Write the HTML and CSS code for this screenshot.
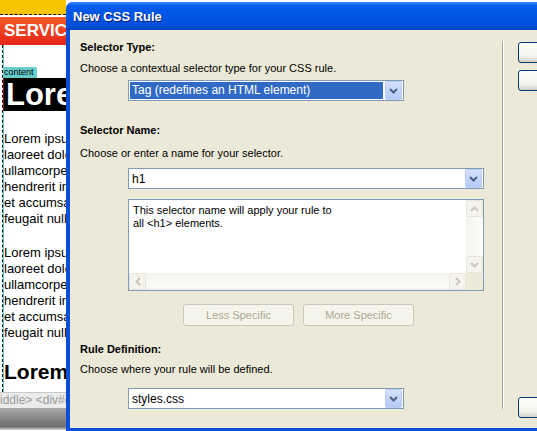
FILE: index.html
```html
<!DOCTYPE html>
<html lang="en">
<head>
<meta charset="UTF-8">
<title>New CSS Rule</title>
<link rel="stylesheet" href="styles.css">
</head>
<body>
    <div class="page">
        <div class="topbar"></div>
        <div class="banner">SERVICES</div>
        <div class="content">
            <div class="tag">content</div>
            <div class="hero">Lorem ipsum</div>
            <p class="para">Lorem ipsum dolor sit amet<br>laoreet dolore magna<br>ullamcorper suscipit<br>hendrerit in vulputate<br>et accumsan et iusto<br>feugait nulla facilisi</p>
            <p class="para">Lorem ipsum dolor sit amet<br>laoreet dolore magna<br>ullamcorper suscipit<br>hendrerit in vulputate<br>et accumsan et iusto<br>feugait nulla facilisi</p>
            <div class="subhead">Lorem ipsum</div>
        </div>
        <div class="status">iddle&gt; &lt;div#container&gt;</div>
        <div class="props"></div>
    </div>

    <div class="dialog">
        <div class="titlebar">New CSS Rule</div>
        <div class="dlgbody">
            <div class="main">
                <div class="label lbl1">Selector Type:</div>
                <div class="desc desc1">Choose a contextual selector type for your CSS rule.</div>
                <div class="select sel1">
                    <span class="picked">Tag (redefines an HTML element)</span>
                    <span class="drop"><svg width="9" height="6" viewBox="0 0 9 6"><polyline points="1,1 4.5,4.5 8,1" fill="none" stroke="#4d6185" stroke-width="2"/></svg></span>
                </div>

                <div class="label lbl2">Selector Name:</div>
                <div class="desc desc2">Choose or enter a name for your selector.</div>
                <div class="select combo">
                    <span class="val">h1</span>
                    <span class="drop"><svg width="9" height="6" viewBox="0 0 9 6"><polyline points="1,1 4.5,4.5 8,1" fill="none" stroke="#4d6185" stroke-width="2"/></svg></span>
                </div>

                <div class="infobox">
                    <div class="infotext">This selector name will apply your rule to<br>all &lt;h1&gt; elements.</div>
                    <div class="vscroll">
                        <span class="sbtn"><svg width="9" height="6" viewBox="0 0 9 6"><polyline points="1,5 4.5,1.5 8,5" fill="none" stroke="#c9c7ba" stroke-width="2"/></svg></span>
                        <span class="sbtn"><svg width="9" height="6" viewBox="0 0 9 6"><polyline points="1,1 4.5,4.5 8,1" fill="none" stroke="#c9c7ba" stroke-width="2"/></svg></span>
                    </div>
                    <div class="hscroll">
                        <span class="sbtn"><svg width="6" height="9" viewBox="0 0 6 9"><polyline points="5,1 1.5,4.5 5,8" fill="none" stroke="#c9c7ba" stroke-width="2"/></svg></span>
                        <span class="sbtn"><svg width="6" height="9" viewBox="0 0 6 9"><polyline points="1,1 4.5,4.5 1,8" fill="none" stroke="#c9c7ba" stroke-width="2"/></svg></span>
                    </div>
                    <div class="corner"></div>
                </div>

                <div class="specrow">
                    <button class="xpbtn off">Less Specific</button>
                    <button class="xpbtn off">More Specific</button>
                </div>

                <div class="label lbl3">Rule Definition:</div>
                <div class="desc desc3">Choose where your rule will be defined.</div>
                <div class="select sel3">
                    <span class="val">styles.css</span>
                    <span class="drop"><svg width="9" height="6" viewBox="0 0 9 6"><polyline points="1,1 4.5,4.5 8,1" fill="none" stroke="#4d6185" stroke-width="2"/></svg></span>
                </div>
            </div>
            <div class="sep"></div>
            <div class="side">
                <button class="xpbtn side1">OK</button>
                <button class="xpbtn side2">Cancel</button>
                <button class="xpbtn side3">Help</button>
            </div>
        </div>
    </div>
</body>
</html>
```

FILE: styles.css
```css
body{
    margin: 0;
    width: 537px;
    height: 431px;
    overflow: hidden;
    display: flex;
    background: #ffffff;
    font-family: "Liberation Sans", Arial, sans-serif;
}

/* page behind the dialog */
.page{
    width: 66px;
    height: 431px;
    flex-shrink: 0;
    overflow: hidden;
    background: #ffffff;
}
.topbar{
    height: 14px;
    background: #f8c600;
    border-bottom: 1px dashed #000;
}
.banner{
    height: 28px;
    margin-top: 2px;
    background: linear-gradient(#f25a26, #e8261a);
    color: #fff;
    font-weight: bold;
    font-size: 17px;
    line-height: 28px;
    padding-left: 4px;
    white-space: nowrap;
    overflow: hidden;
}
.content{
    height: 347px;
    margin-left: 2px;
    border-left: 1px dashed #000;
    box-shadow: inset 1px 0 0 #5cc8cc;
    padding-top: 22px;
    box-sizing: border-box;
    white-space: nowrap;
    overflow: hidden;
}
.tag{
    width: 33px;
    height: 11px;
    background: #66cccc;
    font-size: 9px;
    line-height: 11px;
    border-radius: 2px 2px 0 0;
    padding-left: 1px;
}
.hero{
    height: 33px;
    background: #000;
    color: #fff;
    font-weight: bold;
    font-size: 31px;
    line-height: 33px;
    padding-left: 2px;
    border-left: 1px solid #7a1a1a;
}
.para{
    margin: 20px 0 0 1px;
    font-size: 13px;
    line-height: 16px;
    color: #000;
}
.para + .para{
    margin-top: 18px;
}
.subhead{
    margin: 19px 0 0 1px;
    font-weight: bold;
    font-size: 21px;
    line-height: 24px;
}
.status{
    height: 15px;
    background: #ebebeb;
    border-top: 1px solid #c8c8c8;
    color: #9a9a9a;
    font-size: 12px;
    line-height: 15px;
    white-space: nowrap;
    overflow: hidden;
}
.props{
    height: 22px;
    background: linear-gradient(#a8a8a8, #6e6e6e 85%, #d8d8d8);
}

/* dialog */
.dialog{
    width: 560px;
    flex-shrink: 0;
    margin-top: 2px;
    height: 429px;
    background: #0a4fd8;
    border-radius: 7px 0 0 0;
    font-family: "Liberation Sans", Tahoma, sans-serif;
    font-size: 11px;
    color: #000;
}
.titlebar{
    height: 28px;
    border-radius: 7px 0 0 0;
    background: linear-gradient(#3d8cf5, #0a5ef0 12%, #0058e6 30%, #0054e3 60%, #0050da 85%, #0042c0);
    color: #fff;
    font-weight: bold;
    font-size: 13px;
    line-height: 29px;
    padding-left: 7px;
    text-shadow: 1px 1px 0 #0a1e6e;
}
.dlgbody{
    margin-left: 4px;
    height: 398px;
    background: #ece9d8;
    display: flex;
}
.main{
    width: 422px;
    padding-left: 10px;
    padding-top: 11px;
}
.label{
    font-weight: bold;
    line-height: 13px;
}
.desc{
    line-height: 13px;
}
.lbl2{ margin-top: 23px; }
.lbl3{ margin-top: 17px; }
.desc1{ margin-top: 8px; }
.desc2{ margin-top: 10px; }
.desc3{ margin-top: 7px; }

.select{
    margin-left: 48px;
    height: 21px;
    box-sizing: border-box;
    border: 1px solid #7f9db9;
    background: #fff;
    display: flex;
    align-items: center;
    padding: 1px;
}
.sel1{ width: 276px; margin-top: 5px; }
.combo{ width: 356px; margin-top: 8px; }
.sel3{ width: 276px; margin-top: 12px; }
.picked{
    flex: 1;
    height: 17px;
    line-height: 17px;
    background: #316ac5;
    color: #fff;
    padding-left: 2px;
    margin-right: 2px;
    font-size: 12px;
}
.val{
    flex: 1;
    padding-left: 2px;
    font-size: 12px;
}
.drop{
    width: 15px;
    height: 17px;
    border: 1px solid #bccbf2;
    border-radius: 2px;
    background: linear-gradient(#d5e1fd, #b5c9f7);
    display: flex;
    align-items: center;
    justify-content: center;
}

.infobox{
    margin: 10px 0 0 48px;
    width: 356px;
    height: 92px;
    box-sizing: border-box;
    border: 1px solid #7f9db9;
    background: #fff;
    display: grid;
    grid-template-columns: 1fr 17px;
    grid-template-rows: 1fr 17px;
}
.infotext{
    padding: 4px 0 0 4px;
    font-size: 11px;
    line-height: 13px;
}
.vscroll{
    background: linear-gradient(90deg, #f4f3ee, #fcfcf8);
    display: flex;
    flex-direction: column;
    justify-content: space-between;
}
.hscroll{
    background: linear-gradient(#f4f3ee, #fcfcf8 80%, #f0efe6);
    display: flex;
    justify-content: space-between;
}
.corner{
    background: #ece9d8;
}
.sbtn{
    width: 15px;
    height: 15px;
    border: 1px solid #e8e6da;
    border-radius: 2px;
    background: #f4f3ee;
    display: flex;
    align-items: center;
    justify-content: center;
}

.specrow{
    margin: 13px 0 0 103px;
    display: flex;
    gap: 9px;
}
.xpbtn{
    height: 22px;
    box-sizing: border-box;
    border: 1px solid #003c74;
    border-radius: 3px;
    background: linear-gradient(#ffffff, #f3f3ee 70%, #d6d0c5);
    font-family: "Liberation Sans", Tahoma, sans-serif;
    font-size: 11px;
    padding: 0;
}
.off{
    width: 111px;
    border-color: #c9c7ba;
    background: #f5f4ea;
    color: #aca899;
}

.sep{
    width: 1px;
    margin-top: 11px;
    height: 368px;
    background: #aca899;
    border-right: 1px solid #fff;
}
.side{
    margin-left: 14px;
    padding-top: 12px;
    display: flex;
    flex-direction: column;
}
.side .xpbtn{
    width: 75px;
    height: 21px;
}
.side2{ margin-top: 7px; }
.side3{ margin-top: 306px; }
```
